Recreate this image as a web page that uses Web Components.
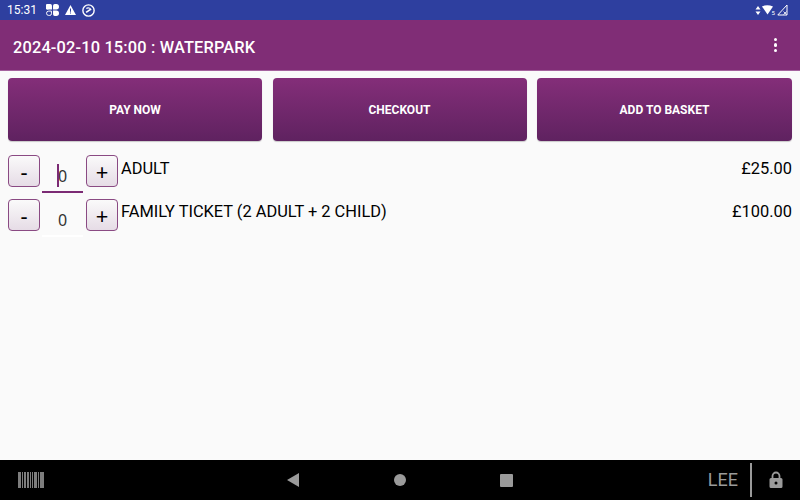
<!DOCTYPE html>
<html>
<head>
<meta charset="utf-8">
<style>
html,body{margin:0;padding:0;height:100%;}
body{width:800px;height:500px;overflow:hidden;font-family:Roboto,sans-serif;background:#fafafa;}
app-shell{height:500px;}
</style>
</head>
<body>
<app-shell>
	<status-bar></status-bar>
	<app-bar title="2024-02-10 15:00 : WATERPARK"></app-bar>
	<action-row>
		<action-button>PAY NOW</action-button>
		<action-button>CHECKOUT</action-button>
		<action-button>ADD TO BASKET</action-button>
	</action-row>
	<ticket-list>
		<ticket-row name="ADULT" price="£25.00" focused></ticket-row>
		<ticket-row name="FAMILY TICKET (2 ADULT + 2 CHILD)" price="£100.00"></ticket-row>
	</ticket-list>
	<nav-bar user="LEE"></nav-bar>
</app-shell>
<script>
'use strict';

class AppShell extends HTMLElement {
	constructor(){
		super();
		this.attachShadow({mode:'open'});
		this.shadowRoot.innerHTML = `
<style>
:host{display:flex;flex-direction:column;width:800px;height:500px;background:#fafafa;}
</style>
<slot></slot>`;
	}
}

class StatusBar extends HTMLElement {
	constructor(){
		super();
		this.attachShadow({mode:'open'});
		this.shadowRoot.innerHTML = `
<style>
:host{display:flex;align-items:center;height:20px;flex:none;background:#2e3f9f;color:#fff;font:12px/20px Roboto,sans-serif;padding:0 12px 0 7px;box-sizing:border-box;}
.left{display:flex;align-items:center;gap:6px;}
.left span{margin-right:3.400px;}
.right{display:flex;align-items:center;margin-left:auto;gap:1px;}
svg{display:block;}
</style>
<div class="left">
	<span>15:31</span>
	<svg width="13" height="12" viewBox="0 0 12 11">
		<path fill="#fff" d="M1 0h3a1.500 1.500 0 0 1 1.500 1.500V5H2.500A2.500 2.500 0 0 1 1 0zM6.500 1.500A1.500 1.500 0 0 1 8 0h1.500a2.500 2.500 0 0 1 0 5h-3zM6.500 6h3a2.500 2.500 0 0 1 0 5H8a1.500 1.500 0 0 1-1.500-1.500z"/>
		<path fill="none" stroke="#fff" stroke-width=".9" d="M2.500 6.500H5V9A1.500 1.500 0 0 1 3.500 10.500H2.500a2 2 0 0 1 0-4z"/>
	</svg>
	<svg width="11" height="10" viewBox="0 0 11 10"><path fill="#fff" fill-rule="evenodd" d="M5.500 0l5.500 10H0zM5 3.500v3.200h1V3.500zM5 7.500v1h1v-1z"/></svg>
	<svg width="13" height="13" viewBox="0 0 12 12"><circle cx="6" cy="6" r="5.200" fill="none" stroke="#fff" stroke-width="1.300"/><path d="M3.800 7.800L8.200 4.800" stroke="#fff" stroke-width="1.500"/><path d="M4 4.200a2.800 2.800 0 0 1 4.400 1.400" fill="none" stroke="#fff"/></svg>
</div>
<div class="right">
	<svg width="6" height="9" viewBox="0 0 6 9"><path fill="#fff" d="M3 0l2.500 3.500H.5zM.5 5.500h5L3 9z"/></svg>
	<svg width="14" height="10" viewBox="0 0 14 10"><path fill="#fff" d="M0 1.500Q5-1 11 1.500L5.500 9.500z"/><text x="9.500" y="10" font-size="6" fill="#fff" font-family="Roboto">5</text></svg>
	<svg width="11" height="12" viewBox="0 0 11 12"><path fill="none" stroke="#fff" d="M10 1V11H.8z"/><path stroke="#fff" stroke-width=".8" d="M6.500 7.500l3 3M9.500 7.500l-3 3"/></svg>
</div>`;
	}
}

class AppBar extends HTMLElement {
	constructor(){
		super();
		this.attachShadow({mode:'open'});
		this.shadowRoot.innerHTML = `
<style>
:host{display:flex;align-items:center;justify-content:space-between;height:51px;flex:none;box-sizing:border-box;background:#802d76;color:#fff;padding:5px 23px 0 13px;border-bottom:1px solid #a5629e;}
h1{margin:0;font:500 16.4px/20px Roboto,sans-serif;letter-spacing:.15px;}
.dots{display:flex;flex-direction:column;gap:2px;margin-top:-5px;}
.dots i{display:block;width:3.500px;height:3.500px;border-radius:50%;background:#fff;}
</style>
<h1></h1>
<div class="dots"><i></i><i></i><i></i></div>`;
		this.shadowRoot.querySelector('h1').textContent = this.getAttribute('title');
	}
}

class ActionRow extends HTMLElement {
	constructor(){
		super();
		this.attachShadow({mode:'open'});
		this.shadowRoot.innerHTML = `
<style>
:host{display:grid;grid-template-columns:254px 254px 255px;gap:10.500px;padding:7px 8px 0;flex:none;}
</style>
<slot></slot>`;
	}
}

class ActionButton extends HTMLElement {
	constructor(){
		super();
		this.attachShadow({mode:'open'});
		this.shadowRoot.innerHTML = `
<style>
:host{display:flex;align-items:center;justify-content:center;height:63px;border-radius:4px;background:linear-gradient(#842e79,#5f2260);color:#fff;font:700 12px/14px Roboto,sans-serif;box-shadow:0 1px 1px rgba(0,0,0,.2);}
</style>
<slot></slot>`;
	}
}

class TicketList extends HTMLElement {
	constructor(){
		super();
		this.attachShadow({mode:'open'});
		this.shadowRoot.innerHTML = `
<style>
:host{display:flex;flex-direction:column;flex:1;padding:14px 8px 0;gap:12px;}
</style>
<slot></slot>`;
	}
}

class TicketRow extends HTMLElement {
	constructor(){
		super();
		this.attachShadow({mode:'open'});
		this.shadowRoot.innerHTML = `
<style>
:host{display:flex;align-items:flex-start;height:32px;color:#000;font:16.4px/20px Roboto,sans-serif;}
.btn{flex:none;box-sizing:border-box;width:32px;height:32px;border:1px solid #8a4a83;border-radius:4px;background:linear-gradient(#fafafa,#e6dce6);display:flex;align-items:center;justify-content:center;font:22px/20px "Noto Sans",sans-serif;}
.qty{flex:none;box-sizing:border-box;position:relative;width:41px;height:38px;margin:0 3px 0 2px;display:flex;align-items:center;justify-content:center;padding-top:6px;color:#333;border-bottom:2px solid #fff;font:16px/20px "Noto Sans",sans-serif;}
:host([focused]) .qty{border-bottom-color:#7b2a74;}
:host([focused]) .qty::before{content:'';position:absolute;left:15px;top:9px;width:2px;height:23px;background:#7b2a74;}
.name{flex:1;margin-left:3px;padding-top:4px;}
.price{padding-top:4px;}
:host(:not([focused])) .name,:host(:not([focused])) .price{padding-top:3px;}
</style>
<div class="btn">-</div>
<div class="qty">0</div>
<div class="btn">+</div>
<div class="name"></div>
<div class="price"></div>`;
		this.shadowRoot.querySelector('.name').textContent = this.getAttribute('name');
		this.shadowRoot.querySelector('.price').textContent = this.getAttribute('price');
	}
}

class NavBar extends HTMLElement {
	constructor(){
		super();
		this.attachShadow({mode:'open'});
		this.shadowRoot.innerHTML = `
<style>
:host{display:grid;grid-template-columns:1fr auto 1fr;align-items:center;height:40px;flex:none;background:#000;color:#9a9a9a;}
.code{padding-left:18px;}
.keys{display:flex;align-items:center;gap:94.500px;}
.end{display:flex;align-items:center;justify-content:flex-end;font:18px/20px Roboto,sans-serif;padding-right:17px;}
.end i{display:block;width:2px;height:34px;background:#9a9a9a;margin:0 17px 0 12px;}
svg{display:block;}
</style>
<div class="code">
	<svg width="27" height="16" viewBox="0 0 27 16"><path fill="#7d7d7d" d="M0 0h3v16H0zM4 0h1v16H4zM6 0h2v16H6zM9 0h2v16H9zM12 0h1v16h-1zM14 0h1v16h-1zM16 0h3v16h-3zM20 0h1v16h-1zM22 0h4v16h-4z"/></svg>
</div>
<div class="keys">
	<svg width="12" height="14" viewBox="0 0 12 14"><path fill="#9a9a9a" d="M12 0v14L0 7z"/></svg>
	<svg width="12" height="12" viewBox="0 0 12 12"><circle cx="6" cy="6" r="6" fill="#9a9a9a"/></svg>
	<svg width="13" height="13" viewBox="0 0 13 13"><rect width="13" height="13" rx="1" fill="#9a9a9a"/></svg>
</div>
<div class="end">
	<span></span><i></i>
	<svg width="14" height="18" viewBox="0 0 14 18"><path fill="none" stroke="#9a9a9a" stroke-width="1.800" d="M3.500 8V5a3.500 3.500 0 0 1 7 0v3"/><path fill="#9a9a9a" fill-rule="evenodd" d="M2 7h10a1.500 1.500 0 0 1 1.500 1.500v7A1.500 1.500 0 0 1 12 17H2A1.500 1.500 0 0 1 .5 15.500v-7A1.500 1.500 0 0 1 2 7zM7 10.500a1.500 1.500 0 1 0 0 3 1.500 1.500 0 0 0 0-3z"/></svg>
</div>`;
		this.shadowRoot.querySelector('span').textContent = this.getAttribute('user');
	}
}

window.customElements.define('app-shell',AppShell);
window.customElements.define('status-bar',StatusBar);
window.customElements.define('app-bar',AppBar);
window.customElements.define('action-row',ActionRow);
window.customElements.define('action-button',ActionButton);
window.customElements.define('ticket-list',TicketList);
window.customElements.define('ticket-row',TicketRow);
window.customElements.define('nav-bar',NavBar);
</script>
</body>
</html>
